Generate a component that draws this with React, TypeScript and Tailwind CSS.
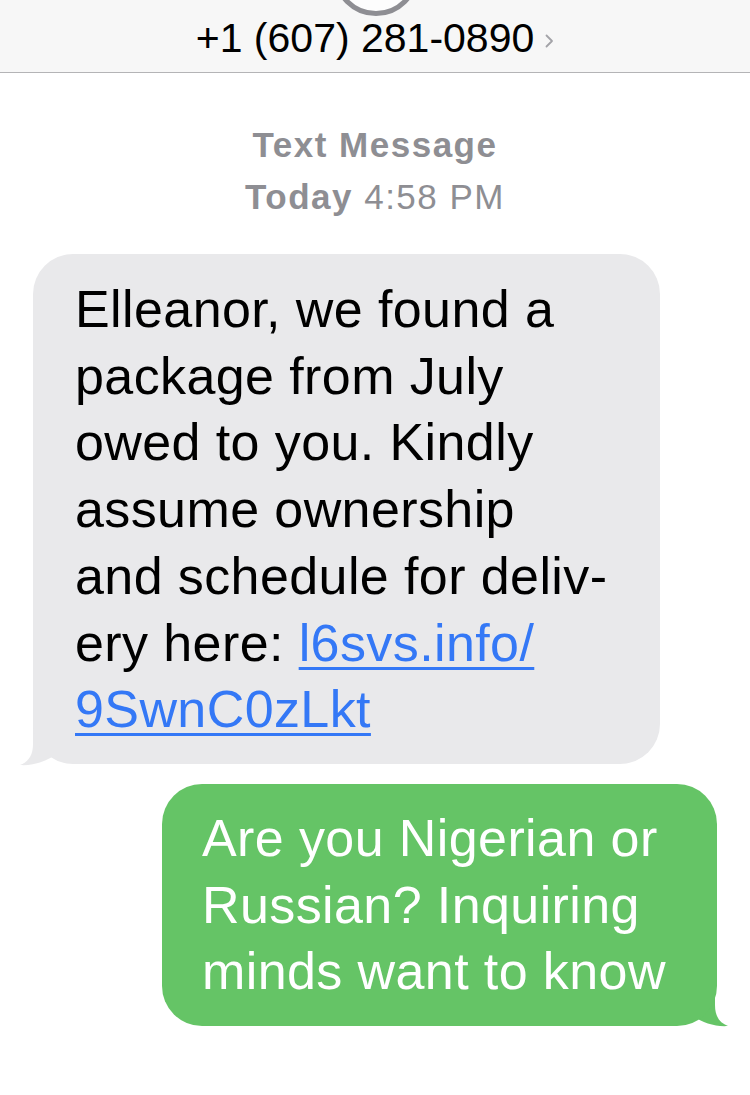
import React from "react";

function Tail({ color, flip }: { color: string; flip?: boolean }) {
  return (
    <svg
      width="60"
      height="50"
      viewBox="0 0 60 50"
      className={
        flip
          ? "absolute right-[-11px] bottom-[-1px] -scale-x-100"
          : "absolute left-[-13px] bottom-[-2px]"
      }
    >
      <path
        d="M13 3 L13 28 C13 40 8 46 0 49 C12 50 25 46 35 39 L50 3 Z"
        fill={color}
      />
    </svg>
  );
}

export default function App() {
  return (
    <div className="w-[750px] h-[1095px] bg-white overflow-hidden font-['Liberation_Sans',Arial,sans-serif]">
      {/* nav header */}
      <div className="relative h-[73px] bg-[#f7f7f7] border-b border-[#b4b4b6] overflow-hidden">
        <div className="absolute left-[333px] top-[-70px] w-[86px] h-[86px] rounded-full border-[5px] border-[#8e8e93] bg-[#fdfdfd]" />
        <div className="flex items-center justify-center gap-[11px] pt-[18px]">
          <span className="text-[41px] leading-[41px] text-black">+1 (607) 281-0890</span>
          <svg width="9" height="14" viewBox="0 0 9 14" className="mt-[4px]">
            <polyline
              points="1.5,1.5 7,7 1.5,12.5"
              fill="none"
              stroke="#a3a3a8"
              strokeWidth="1.8"
              strokeLinecap="round"
              strokeLinejoin="round"
            />
          </svg>
        </div>
      </div>

      {/* timestamp */}
      <div className="mt-[46px] text-center text-[#8e8e93] text-[35px] leading-[52px] tracking-[1.5px]">
        <div className="font-bold">Text Message</div>
        <div>
          <span className="font-bold">Today</span> 4:58 PM
        </div>
      </div>

      {/* incoming */}
      <div className="mt-[31px] ml-[33px] w-[627px] relative">
        <div className="relative z-10 bg-[#e9e9eb] rounded-[40px] pt-[22px] pb-[21px] pl-[42px] pr-[20px] text-[52px] leading-[66.7px] tracking-[0.4px] text-black">
          Elleanor, we found a
          <br />
          package from July
          <br />
          owed to you. Kindly
          <br />
          assume ownership
          <br />
          and schedule for deliv-
          <br />
          ery here:{" "}
          <a className="text-[#3478f6] underline decoration-[3px] underline-offset-[6px]">
            l6svs.info/
            <br />
            9SwnC0zLkt
          </a>
        </div>
        <Tail color="#e9e9eb" />
      </div>

      {/* outgoing */}
      <div className="mt-[20px] ml-[162px] w-[555px] relative">
        <div className="relative z-10 bg-[#65c466] rounded-[40px] pt-[21px] pb-[21px] pl-[40px] pr-[10px] text-[52px] leading-[66.7px] tracking-[0.4px] text-white">
          Are you Nigerian or
          <br />
          Russian? Inquiring
          <br />
          minds want to know
        </div>
        <Tail color="#65c466" flip />
      </div>
    </div>
  );
}
